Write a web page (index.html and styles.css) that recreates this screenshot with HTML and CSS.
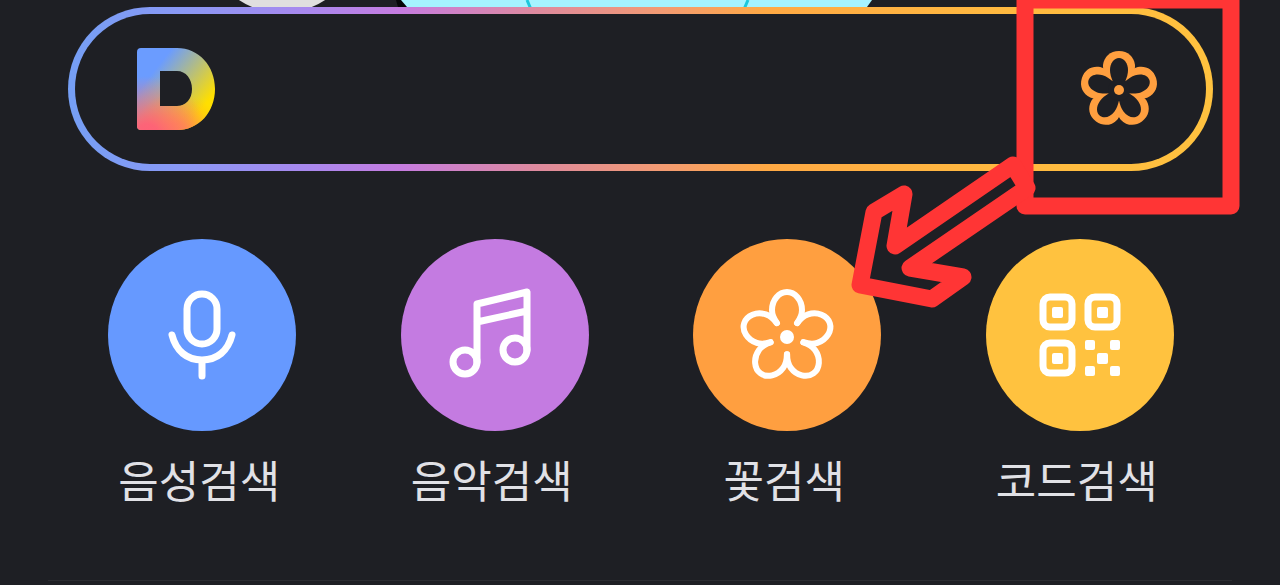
FILE: index.html
```html
<!DOCTYPE html>
<html lang="ko">
<head>
    <meta charset="UTF-8">
    <meta name="viewport" content="width=device-width, initial-scale=1.0">
    <title>검색</title>
    <link rel="stylesheet" href="styles.css">
</head>
<body>
    <main class="page">
        <svg class="banner" width="660" height="14" viewBox="230 0 660 14" aria-hidden="true">
            <ellipse cx="282" cy="-65" rx="78" ry="78" fill="#e0dfdf"/>
            <path d="M396 0 L404 0 L412 14 L400 14Z" fill="#050608"/>
            <path d="M401 0 H872 L862 14 H413Z" fill="#a5f3ff"/>
            <path d="M527 0 L533 14 M748 0 L742 14" stroke="#1cc8dc" stroke-width="3"/>
        </svg>

        <form class="search">
            <a href="#" class="logo" aria-label="Daum">
                <svg width="78" height="82" viewBox="0 0 78 82">
                    <defs>
                        <linearGradient id="dBase" gradientUnits="userSpaceOnUse" x1="24" y1="14" x2="72" y2="52">
                            <stop offset="0" stop-color="#6b9cff"/>
                            <stop offset="1" stop-color="#ffdf00"/>
                        </linearGradient>
                        <radialGradient id="dPink" gradientUnits="userSpaceOnUse" cx="10" cy="88" r="60">
                            <stop offset="0" stop-color="#ff6078"/>
                            <stop offset="0.2" stop-color="#ff6078" stop-opacity="0.95"/>
                            <stop offset="1" stop-color="#ff7a70" stop-opacity="0"/>
                        </radialGradient>
                        <radialGradient id="dOrange" gradientUnits="userSpaceOnUse" cx="40" cy="88" r="44">
                            <stop offset="0" stop-color="#ff8a48"/>
                            <stop offset="0.3" stop-color="#ff9440" stop-opacity="0.9"/>
                            <stop offset="1" stop-color="#ffb020" stop-opacity="0"/>
                        </radialGradient>
                        <path id="dShape" fill-rule="evenodd" d="M4 0 H40 C62 0 78 18 78 41 C78 64 62 82 40 82 H4 Q0 82 0 78 V4 Q0 0 4 0Z M23 23 V58 H40 C49 58 55 51 55 41 C55 31 49 23 40 23Z"/>
                    </defs>
                    <use href="#dShape" fill="url(#dBase)"/>
                    <use href="#dShape" fill="url(#dOrange)"/>
                    <use href="#dShape" fill="url(#dPink)"/>
                </svg>
            </a>
            <input type="text" class="search-input" aria-label="검색어">
            <button type="button" class="search-flower" aria-label="꽃검색">
                <svg width="80" height="80" viewBox="-40 -41 80 80">
                    <defs>
                        <path id="petalOuter" d="M0 0 L-15 -19 C-16 -21 -16 -23 -16 -25 C-15 -33 -9 -39 0 -39 C9 -39 15 -33 16 -25 C16 -23 16 -21 15 -19Z"/>
                        <path id="petalInner" d="M0 -3 L-6 -8 C-8 -13 -9 -16 -9 -20 C-9 -27 -5 -32 0 -32 C5 -32 9 -27 9 -20 C9 -16 8 -13 6 -8Z"/>
                    </defs>
                    <g fill="#ff9f3f">
                        <use href="#petalOuter"/>
                        <use href="#petalOuter" transform="rotate(72)"/>
                        <use href="#petalOuter" transform="rotate(144)"/>
                        <use href="#petalOuter" transform="rotate(216)"/>
                        <use href="#petalOuter" transform="rotate(288)"/>
                    </g>
                    <g fill="#1e1f24">
                        <use href="#petalInner"/>
                        <use href="#petalInner" transform="rotate(72)"/>
                        <use href="#petalInner" transform="rotate(144)"/>
                        <use href="#petalInner" transform="rotate(216)"/>
                        <use href="#petalInner" transform="rotate(288)"/>
                        <circle r="11"/>
                    </g>
                    <circle r="5" fill="#ff9f3f"/>
                </svg>
            </button>
        </form>

        <nav class="menu">
            <a href="#" class="menu-item">
                <span class="circle blue">
                    <svg class="icon" viewBox="-50 -50 100 100">
                        <rect x="-15" y="-41" width="30" height="50" rx="15"/>
                        <path d="M-30 0 C-26 16 -15 25 0 25 C15 25 26 16 30 0 M0 25 V41"/>
                    </svg>
                </span>
                <span class="label">음성검색</span>
            </a>
            <a href="#" class="menu-item">
                <span class="circle purple">
                    <svg class="icon" viewBox="-50 -50 100 100">
                        <circle cx="-30" cy="27" r="12"/>
                        <circle cx="20" cy="15" r="12"/>
                        <path d="M-18 27 V-31 L32 -43 V15 M-18 -13 L32 -24"/>
                    </svg>
                </span>
                <span class="label">음악검색</span>
            </a>
            <a href="#" class="menu-item">
                <span class="circle orange">
                    <svg class="icon thin" viewBox="-50 -52 100 100">
                        <defs>
                            <path id="petal" d="M-10 -14 C-13 -18 -15 -22 -15 -27 C-15 -37 -8 -45 0 -45 C8 -45 15 -37 15 -27 C15 -22 13 -18 10 -14"/>
                        </defs>
                        <use href="#petal"/>
                        <use href="#petal" transform="rotate(72)"/>
                        <use href="#petal" transform="rotate(144)"/>
                        <use href="#petal" transform="rotate(216)"/>
                        <use href="#petal" transform="rotate(288)"/>
                        <circle class="solid" r="7"/>
                    </svg>
                </span>
                <span class="label">꽃검색</span>
            </a>
            <a href="#" class="menu-item">
                <span class="circle yellow">
                    <svg class="icon" viewBox="-50 -50 100 100">
                        <rect x="-37" y="-38" width="29" height="30" rx="7"/>
                        <rect x="8" y="-38" width="29" height="30" rx="7"/>
                        <rect x="-37" y="8" width="29" height="30" rx="7"/>
                        <g class="solid">
                            <rect x="-28" y="-28" width="11" height="11" rx="2"/>
                            <rect x="17" y="-28" width="11" height="11" rx="2"/>
                            <rect x="-28" y="18" width="11" height="11" rx="2"/>
                            <rect x="5" y="5" width="10" height="10" rx="2"/>
                            <rect x="30" y="5" width="10" height="10" rx="2"/>
                            <rect x="17" y="18" width="11" height="11" rx="2"/>
                            <rect x="5" y="31" width="10" height="10" rx="2"/>
                            <rect x="30" y="31" width="10" height="10" rx="2"/>
                        </g>
                    </svg>
                </span>
                <span class="label">코드검색</span>
            </a>
        </nav>

        <hr class="divider">

        <!-- red marker: box around the flower button, arrow to the menu item -->
        <svg class="marker" width="440" height="320" viewBox="840 0 440 320" aria-hidden="true">
            <path d="M1025 0 H1231 V206 H1025Z"/>
            <path d="M1013 165 L895 246 L904 194 L874 212 L860 285 L932 299 L963 277 L910 268 L1027 188Z"/>
        </svg>
    </main>
</body>
</html>
```

FILE: styles.css
```css
:root {
    --bg: #1e1f24;
    --text: #e1e1e6;
    --blue: #6699ff;
    --purple: #c47be1;
    --orange: #ff9f40;
    --yellow: #ffc23f;
    --red: #ff3535;
}

* {
    box-sizing: border-box;
    margin: 0;
    padding: 0;
}

body {
    background-color: var(--bg);
    color: var(--text);
    font-family: "Noto Sans CJK KR", sans-serif;
}

.page {
    position: relative;
    padding-top: 7px;
    overflow: hidden;
}

.banner {
    position: absolute;
    top: 0;
    left: 230px;
}

.search {
    position: relative;
    display: flex;
    align-items: center;
    height: 164px;
    margin: 0 67px 0 68px;
    padding: 0 47px 0 62px;
    border: 7px solid transparent;
    border-radius: 82px;
    background:
        linear-gradient(var(--bg), var(--bg)) padding-box,
        linear-gradient(90deg, #759ff5 0%, #8a98f5 10%, #a988ee 21%, #c67ce0 29%, #de8a9e 41%, #f39b72 52%, #ffa944 61%, #ffb840 80%, #ffc23f 100%) border-box;
}

.logo svg,
.search-flower svg {
    display: block;
}

.search-input {
    flex: 1;
    min-width: 0;
    height: 100px;
    padding: 0 24px;
    border: none;
    outline: none;
    background: transparent;
    color: var(--text);
    font-family: inherit;
    font-size: 44px;
}

.search-flower {
    border: none;
    background: none;
    cursor: pointer;
}

.menu {
    display: grid;
    grid-template-columns: repeat(4, 1fr);
    padding: 68px 54px 0 56px;
}

.menu-item {
    display: flex;
    flex-direction: column;
    align-items: center;
    gap: 16px;
    color: var(--text);
    text-decoration: none;
}

.circle {
    display: flex;
    align-items: center;
    justify-content: center;
    width: 188px;
    height: 192px;
    border-radius: 50%;
}

.blue {
    background-color: var(--blue);
}

.purple {
    background-color: var(--purple);
}

.orange {
    background-color: var(--orange);
}

.yellow {
    background-color: var(--yellow);
}

.icon {
    width: 100px;
    height: 100px;
    fill: none;
    stroke: #fff;
    stroke-width: 7px;
    stroke-linecap: round;
    stroke-linejoin: round;
}

.icon.thin {
    stroke-width: 6px;
}

.icon .solid {
    fill: #fff;
    stroke: none;
}

.label {
    padding-right: 6px;
    font-size: 44px;
    line-height: 64px;
}

.divider {
    margin: 69px 48px 4px;
    border: none;
    border-top: 1px solid #2b2c31;
}

.marker {
    position: absolute;
    top: 0;
    right: 0;
    fill: none;
    stroke: var(--red);
    stroke-width: 17px;
    stroke-linejoin: round;
    pointer-events: none;
}
```
